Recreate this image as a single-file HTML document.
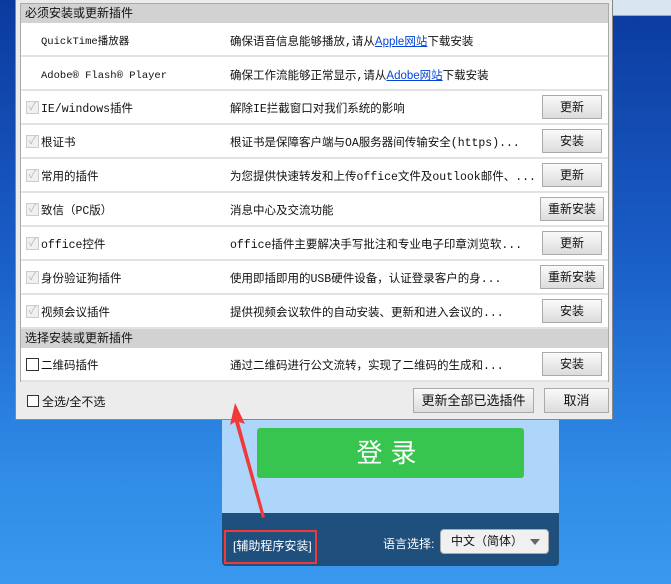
<!DOCTYPE html><html><head><meta charset="utf-8"><style>
*{margin:0;padding:0;box-sizing:border-box}
body{width:671px;height:584px;overflow:hidden;position:relative;background:linear-gradient(180deg,#0b3a9e 0%,#1a5fc8 45%,#2f8be6 80%,#3a98ee 100%);font-family:"Liberation Sans","Noto Sans CJK SC",sans-serif;font-size:12px;color:#111}
.abs{position:absolute}
#topr{left:612px;top:0;width:59px;height:16px;background:#d9e5f1;border-bottom:1px solid #9ab}
#dlg{left:15px;top:0;width:598px;height:420px;background:#ececec;border:1px solid #888;border-top:none}
#list{left:20px;top:3px;width:589px;height:379px;background:#fff;border:1px solid #aaa}
.hdr{position:absolute;left:0;width:587px;height:19px;background:#d2d2d2;line-height:19px;padding-left:4px;font-size:12px}
.row{position:absolute;left:0;width:587px;height:34px;border-bottom:2px solid #e2e2e2;line-height:32px}
.row .n{position:absolute;left:20px;top:3px;font-family:"Liberation Mono","Noto Sans CJK SC",monospace;font-size:11.5px}
.row .d{position:absolute;left:209px;top:3px;white-space:nowrap;font-family:"Liberation Mono","Noto Sans CJK SC",monospace;font-size:11.5px}
.row .cb{position:absolute;left:5px;top:10px;width:13px;height:13px;border:1px solid #ccc;background:#f0f0f0;color:#bbb;font-size:11px;line-height:11px;text-align:center}
.mono{font-size:10.5px!important}
.btn{position:absolute;left:521px;top:4px;width:60px;height:24px;border:1px solid #aaa;background:linear-gradient(#fafafa,#dcdcdc);text-align:center;line-height:22px}
a{color:#0645d8;text-decoration:underline;font-family:"Liberation Sans","Noto Sans CJK SC",sans-serif}
.fb{border:1px solid #aaa;background:linear-gradient(#fafafa,#dcdcdc);text-align:center;line-height:23px;font-size:13px}
</style></head><body>
<div id="topr" class="abs"></div>
<div class="abs" style="left:222px;top:418px;width:337px;height:96px;background:#aed6fb"></div>
<div class="abs" style="left:222px;top:513px;width:337px;height:53px;background:#1e4f7d;border-radius:0 0 4px 4px"></div>
<div class="abs" style="left:257px;top:428px;width:267px;height:50px;background:#37c44f;border-radius:3px;color:#fff;font-size:26px;text-align:center;line-height:50px;letter-spacing:8px">登录</div>
<div class="abs" style="left:224px;top:530px;width:93px;height:34px;border:2px solid #f03a3a;color:#fff;font-size:12px;line-height:28px;padding-left:7px">[辅助程序安装]</div>
<div class="abs" style="left:383px;top:535px;color:#fff;font-size:12px">语言选择:</div>
<div class="abs" style="left:440px;top:529px;width:109px;height:25px;background:#f0f0f0;border:1px solid #aaa;border-radius:4px;font-size:12px;line-height:23px;padding-left:10px">中文（简体）<span style="position:absolute;right:8px;top:9px;border:5px solid transparent;border-top:6px solid #666"></span></div>
<div id="dlg" class="abs">
<div class="abs fb" style="left:397px;top:388px;width:121px;height:25px">更新全部已选插件</div>
<div class="abs fb" style="left:528px;top:388px;width:65px;height:25px">取消</div>
<div class="abs" style="left:11px;top:395px;width:12px;height:12px;border:1px solid #333;background:#fff"></div>
<div class="abs" style="left:26px;top:393px;font-size:12px">全选/全不选</div>
</div>
<div id="list" class="abs">
<div class="hdr" style="top:0">必须安装或更新插件</div>
<div class="row" style="top:19px"><span class="n mono">QuickTime播放器</span><span class="d">确保语音信息能够播放,请从<a>Apple网站</a>下载安装</span></div>
<div class="row" style="top:53px"><span class="n mono">Adobe® Flash® Player</span><span class="d">确保工作流能够正常显示,请从<a>Adobe网站</a>下载安装</span></div>
<div class="row" style="top:87px"><span class="cb">✓</span><span class="n">IE/windows插件</span><span class="d">解除IE拦截窗口对我们系统的影响</span><span class="btn">更新</span></div>
<div class="row" style="top:121px"><span class="cb">✓</span><span class="n">根证书</span><span class="d">根证书是保障客户端与OA服务器间传输安全(https)...</span><span class="btn">安装</span></div>
<div class="row" style="top:155px"><span class="cb">✓</span><span class="n">常用的插件</span><span class="d">为您提供快速转发和上传office文件及outlook邮件、...</span><span class="btn">更新</span></div>
<div class="row" style="top:189px"><span class="cb">✓</span><span class="n">致信（PC版）</span><span class="d">消息中心及交流功能</span><span class="btn" style="left:519px;width:64px">重新安装</span></div>
<div class="row" style="top:223px"><span class="cb">✓</span><span class="n">office控件</span><span class="d">office插件主要解决手写批注和专业电子印章浏览软...</span><span class="btn">更新</span></div>
<div class="row" style="top:257px"><span class="cb">✓</span><span class="n">身份验证狗插件</span><span class="d">使用即插即用的USB硬件设备，认证登录客户的身...</span><span class="btn" style="left:519px;width:64px">重新安装</span></div>
<div class="row" style="top:291px"><span class="cb">✓</span><span class="n">视频会议插件</span><span class="d">提供视频会议软件的自动安装、更新和进入会议的...</span><span class="btn">安装</span></div>
<div class="hdr" style="top:325px">选择安装或更新插件</div>
<div class="row" style="top:344px"><span class="cb" style="border-color:#333;background:#fff"></span><span class="n">二维码插件</span><span class="d">通过二维码进行公文流转，实现了二维码的生成和...</span><span class="btn">安装</span></div>
</div>
<svg class="abs" style="left:228px;top:400px" width="40" height="120"><polygon points="7,3 2,25 7,22 34,118 37,117 11,22 17,24" fill="#f03a3a"/></svg>
</body></html>
